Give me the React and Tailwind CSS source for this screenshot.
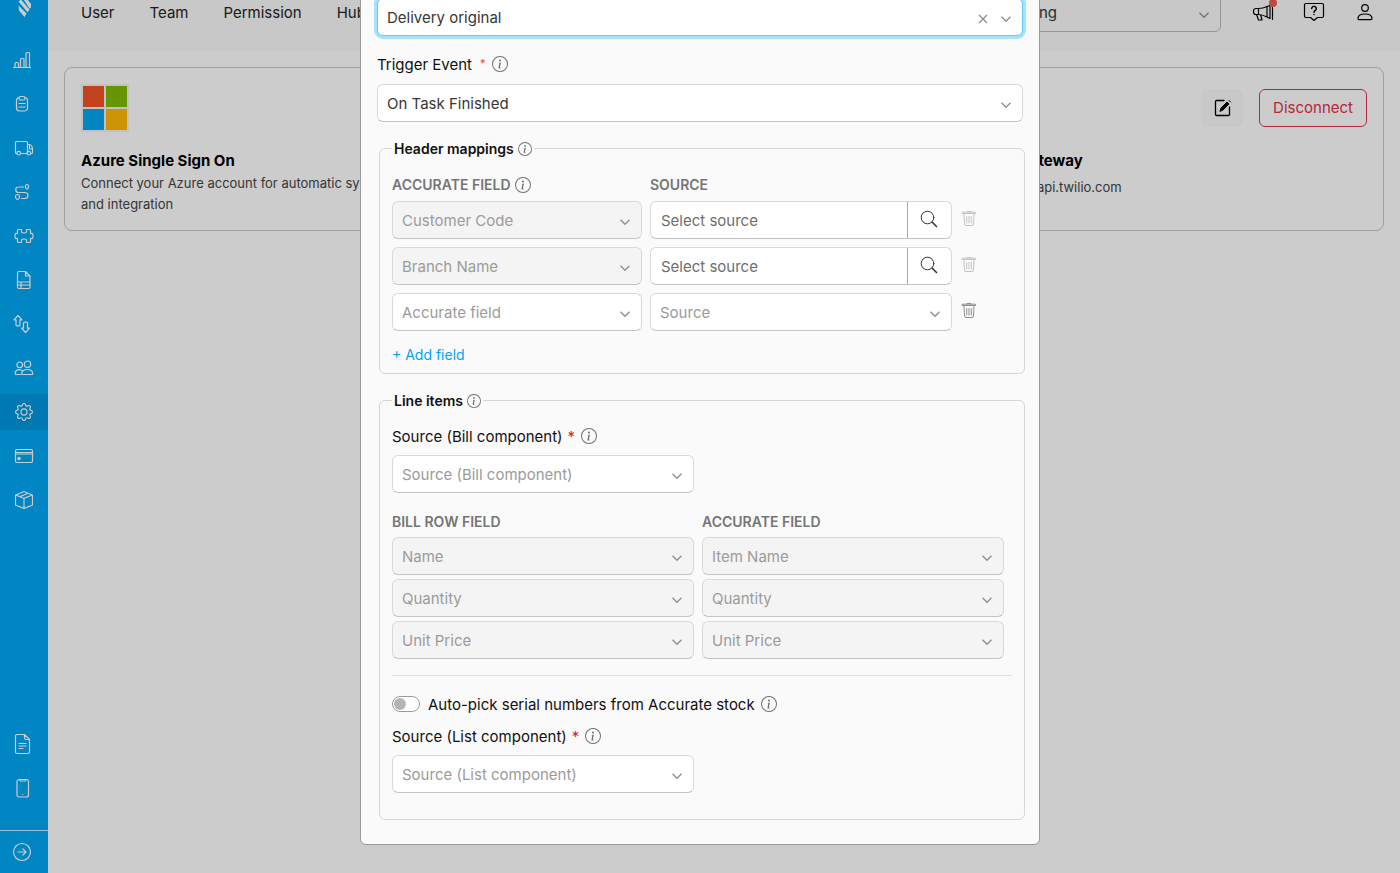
import { useState } from "react";
import { BsInfoCircle, BsGear, BsBoxSeam } from "react-icons/bs";

function Icon({ children, className = "" }) {
  return (
    <svg width="24" height="24" viewBox="0 0 24 24" fill="none" stroke="currentColor" strokeWidth="1.2" strokeLinecap="round" strokeLinejoin="round" className={className} aria-hidden="true">
      {children}
    </svg>
  );
}

const mainMenu = [
  { label: "Dashboard", icon: <Icon><path d="M1.5 19.5h17M3 19v-3.500a1 1 0 0 1 1-1h1.500a1 1 0 0 1 1 1V19M8.500 19v-7.500a1 1 0 0 1 1-1H11a1 1 0 0 1 1 1V19M14 19V5.500a1 1 0 0 1 1-1h1.500a1 1 0 0 1 1 1V19" /></Icon> },
  { label: "Tasks", icon: <Icon><path d="M7 5.500a3 3 0 0 0-2.500 3V16A3 3 0 0 0 7.500 19h5a3 3 0 0 0 3-3V8.500a3 3 0 0 0-2.500-3M7 11.500h6M7 15h6" /><rect x="7" y="4.500" width="6" height="3.500" rx="1.500" /></Icon> },
  { label: "Delivery", icon: <Icon><path d="M5 17.500H4.500a1 1 0 0 1-1-1v-10a1 1 0 0 1 1-1h10a1 1 0 0 1 1 1v11M8.500 17.500H15M15.500 8.500h2c1.500 0 3 2.500 3 4.500v3.500a1 1 0 0 1-1 1h-1" /><circle cx="6.700" cy="17.200" r="1.800" /><circle cx="16.800" cy="17.200" r="1.800" /><path d="M17.500 9v4h3" /></Icon> },
  { label: "Routes", icon: <Icon><path d="M11.500 7H6.500a2.700 2.700 0 0 0 0 5.500H13a3 3 0 0 1 0 6H9.500" /><path d="M14.500 9c-2-2.500-1-4.500.5-4.500s2.500 2 .5 4.500zM5.500 14.500a2 2 0 0 1 2 2c0 1.300-1 3-2 3s-2-1.700-2-3a2 2 0 0 1 2-2z" /></Icon> },
  { label: "Integrations", icon: <Icon><path d="M6.500 5.500H9c.8 0 .8.600.500 1.300-.5 1.200.5 2.200 2.500 2.200s3-1 2.500-2.200c-.3-.7-.3-1.300.5-1.300h2.500a1 1 0 0 1 1 1V9c0 .8.500.8 1 .5 1.200-.5 1.500.5 1.500 2.500s-.3 3-1.500 2.500c-.5-.3-1-.3-1 .5v2.500a1 1 0 0 1-1 1H15c-.8 0-.8-.6-.5-1.300.5-1.200-.5-2.200-2.500-2.200s-3 1-2.500 2.200c.3.700.3 1.300-.5 1.300H6.500a1 1 0 0 1-1-1V15c0-.8-.5-.8-1-.5-1.200.5-1.500-.5-1.500-2.500s.3-3 1.500-2.500c.5.300 1 .3 1-.5V6.500a1 1 0 0 1 1-1z" /></Icon> },
  { label: "Reports", icon: <Icon><path d="M13.500 3.500H7a1.500 1.500 0 0 0-1.500 1.500v14A1.500 1.500 0 0 0 7 20.500h9.500A1.500 1.500 0 0 0 18 19V8zM13.500 3.500V8H18M5.500 14H18M5.500 17H18M9 14v6" /></Icon> },
  { label: "Flows", icon: <Icon><path d="M6 3.500l4 4.300H8v5a1 1 0 0 1-1 1H5a1 1 0 0 1-1-1v-5H2zM13.500 20.500l-4-4.300h2v-5a1 1 0 0 1 1-1h2a1 1 0 0 1 1 1v5h2z" /></Icon> },
  { label: "Users", icon: <Icon><circle cx="7.700" cy="8.800" r="2.800" /><circle cx="15.500" cy="8.200" r="3.200" /><path d="M8.500 18.500H4a.8.800 0 0 1-.8-.8c0-2.500 2-4 4.300-4 .8 0 1.600.2 2.200.500M10.500 18.500a.8.800 0 0 1-.8-.8c0-2.700 2.400-4.200 5.600-4.200s5.400 1.500 5.400 4.200a.8.800 0 0 1-.8.800z" /></Icon> },
  { label: "Settings", icon: <BsGear size={18} />, active: true },
  { label: "Billing", icon: <Icon><rect x="3.500" y="5.500" width="17" height="13" rx="1.500" /><path d="M3.500 8.500h17M3.500 10h17" /><circle cx="7" cy="14.500" r="1.200" fill="currentColor" /></Icon> },
  { label: "Inventory", icon: <BsBoxSeam size={18} /> },
];

const bottomMenu = [
  { label: "Documentation", icon: <Icon className="-ml-1"><path d="M14.500 2.500H7A1.500 1.500 0 0 0 5.500 4v16A1.500 1.500 0 0 0 7 21.500h11a1.500 1.500 0 0 0 1.500-1.500V7.500zM14.500 2.500v3.500a1.500 1.500 0 0 0 1.500 1.500h3.500M9 11.500h7M9 14h7M9 16.500h4" /></Icon> },
  { label: "Mobile app", icon: <Icon className="-ml-1"><rect x="7" y="3.500" width="11.500" height="17.500" rx="2" /><path d="M9.500 3.500l.8 1.500h5l.7-1.500M12.700 18.500h.1" /></Icon> },
];

function Sidebar() {
  return (
    <aside className="flex w-12 shrink-0 flex-col bg-[#00a8f3] text-white">
      <svg viewBox="0 0 24 24" className="-mt-1 ml-3 h-6 w-6" aria-hidden="true" fill="currentColor">
        <path d="M11 2.500l2.500-1.500 5.500 7v3.500l-1.500 1zM6.500 5.500l2.500-2 8.500 10-2 2.800zM6.500 9.500l8 8-2 3.500-5.500-6.500z" />
      </svg>
      <nav className="mt-[22px] flex flex-col gap-2">
        {mainMenu.map((item) => (
          <a key={item.label} href="#" aria-label={item.label} className={`flex h-9 items-center justify-center ${item.active ? "bg-[#0097de]" : ""}`}>
            {item.icon}
          </a>
        ))}
      </nav>
      <nav className="mt-auto flex flex-col gap-2 pb-6">
        {bottomMenu.map((item) => (
          <a key={item.label} href="#" aria-label={item.label} className="flex h-9 items-center justify-center">
            {item.icon}
          </a>
        ))}
      </nav>
      <button aria-label="Expand menu" className="flex h-[43px] w-full items-center border-t border-white/80 pl-[10px]">
        <Icon><circle cx="12" cy="12" r="8.500" /><path d="M8 12h8M12.800 8.800L16 12l-3.200 3.200" /></Icon>
      </button>
    </aside>
  );
}

function Chevron() {
  return (
    <svg width="12" height="12" viewBox="0 0 12 12" fill="none" stroke="currentColor" strokeWidth="1.300" className="pointer-events-none absolute top-1/2 right-[11px] -mt-1 text-[#8f8f8f]" aria-hidden="true">
      <path d="M1.500 3.800L6 8.300l4.500-4.500" />
    </svg>
  );
}

function Select({ value, muted = true, disabled = false, focused = false, ...rest }) {
  const border = focused
    ? "border-[#5ccbfb] ring-[3px] ring-[#a6e2fd]"
    : "border-[#d9d9d9] border-b-[#c4c4c4]";
  return (
    <div className="relative">
      <select
        disabled={disabled}
        defaultValue={value}
        className={`block h-[38px] w-full appearance-none rounded-md border pt-0.5 pr-8 pl-[9px] opacity-100 outline-none ${border} ${disabled ? "bg-[#f4f4f4]" : "bg-white"} ${muted ? "text-[#9b9b9b]" : "text-[#363636]"}`}
        {...rest}
      >
        <option>{value}</option>
      </select>
      <Chevron />
    </div>
  );
}

function Info({ size = 16 }) {
  return <BsInfoCircle size={size} className="shrink-0 text-[#707070]" aria-hidden="true" />;
}

function FieldLabel({ htmlFor, children, mark }) {
  return (
    <div className="flex h-6 items-center gap-[6px]">
      <label htmlFor={htmlFor} className="flex pt-0.5">
        {children} {mark || <span className="ml-[5px] text-[#e5162d]">*</span>}
      </label>
      <Info />
    </div>
  );
}

function SourceInput({ label }) {
  return (
    <div className="flex h-[38px] rounded-md border border-[#d9d9d9] border-b-[#c4c4c4] bg-white">
      <input aria-label={label} placeholder="Select source" className="min-w-0 flex-1 rounded-l-md pt-0.5 pl-[10px] outline-none placeholder:text-[#6e6e6e]" />
      <button aria-label="Search source" className="flex w-11 items-center justify-center border-l border-[#a8a8a8] pr-0.5 pb-0.5 text-[#333]">
        <Icon>
          <circle cx="10.500" cy="10.500" r="6.300" strokeWidth="1" />
          <path d="M15.300 15.300l4.200 4.200" strokeWidth="1.600" />
        </Icon>
      </button>
    </div>
  );
}

function TrashButton({ disabled = false }) {
  return (
    <button disabled={disabled} aria-label="Remove field" className={`-ml-2 flex h-9 w-[34px] items-center justify-center ${disabled ? "text-[#c4c4c4]" : "text-[#8f8f8f]"}`}>
      <Icon>
        <path d="M5.500 6.500h13v-1.300h-13zM10 5V4.500h4V5M7 7l.5 10a1.500 1.500 0 0 0 1.500 1.500h6a1.500 1.500 0 0 0 1.500-1.500L17 7M9.700 9.500v6.500M12 9.500v6.500M14.300 9.500v6.500" strokeWidth="1" />
      </Icon>
    </button>
  );
}

function Legend({ children }) {
  return (
    <legend className="px-0.5">
      <span className="flex h-[21px] items-center gap-1 text-[14px] font-semibold text-[#111]">
        {children} <Info size={14} />
      </span>
    </legend>
  );
}

const headingClass = "flex items-center gap-1 text-[14px] font-semibold text-[#757575]";
const fieldsetClass = "mt-4 -mr-0.5 ml-0.5 rounded-md border border-[#d6d6d6] px-3";

const headerRows = ["Customer Code", "Branch Name"];
const billRows = [
  ["Name", "Item Name"],
  ["Quantity", "Quantity"],
  ["Unit Price", "Unit Price"],
];

function MappingModal() {
  const [autoPick, setAutoPick] = useState(false);

  return (
    <div className="fixed inset-0 flex items-end justify-center overflow-hidden bg-black/20 pb-7">
      <div role="dialog" aria-label="Accurate mapping" className="w-full max-w-[680px] rounded-md border border-[#999] bg-[#fafafa] px-4 pt-4 pb-6 text-[#111]">
        <div className="relative">
          <Select value="Delivery original" muted={false} focused aria-label="Document" />
          <button aria-label="Clear" className="absolute top-1/2 right-[34px] -mt-1 text-[#8f8f8f]">
            <svg width="12" height="12" viewBox="0 0 12 12" fill="none" stroke="currentColor" strokeWidth="1.300"><path d="M2 2l8 8M10 2l-8 8" /></svg>
          </button>
        </div>

        <div className="mt-4 mb-2">
          <FieldLabel htmlFor="trigger" mark={<span className="ml-2 text-[11px] leading-5 text-[#f0443a]">*</span>}>Trigger Event</FieldLabel>
        </div>
        <Select id="trigger" value="On Task Finished" muted={false} />

        <fieldset className={`${fieldsetClass} pb-2`}>
          <Legend>Header mappings</Legend>
          <div className="grid grid-cols-[250px_302px_34px] gap-x-2 pt-[14px]">
            <div className={`${headingClass} mb-1 h-6`}>ACCURATE FIELD <Info /></div>
            <div className={`${headingClass} mb-1 h-6`}>SOURCE</div>
          </div>
          <div className="flex flex-col gap-2">
            {headerRows.map((name) => (
              <div key={name} className="grid grid-cols-[250px_302px_34px] gap-x-2">
                <Select value={name} disabled aria-label={name} />
                <SourceInput label={`${name} source`} />
                <TrashButton disabled />
              </div>
            ))}
            <div className="grid grid-cols-[250px_302px_34px] gap-x-2">
              <Select value="Accurate field" aria-label="Accurate field" />
              <Select value="Source" aria-label="Source" />
              <TrashButton />
            </div>
          </div>
          <button className="mt-[14px] block h-5 text-[14px] leading-5 text-[#00a3f5]">+ Add field</button>
        </fieldset>

        <fieldset className={`${fieldsetClass} pb-[26px]`}>
          <Legend>Line items</Legend>
          <div className="mt-[13px] mb-[7px]">
            <FieldLabel htmlFor="bill-source">Source (Bill component)</FieldLabel>
          </div>
          <div className="grid grid-cols-2 gap-2 pr-2">
            <Select id="bill-source" value="Source (Bill component)" />
          </div>

          <div className="mt-[18px] grid grid-cols-2 gap-x-2 gap-y-1 pr-2">
            <div className={`${headingClass} h-[22px]`}>BILL ROW FIELD</div>
            <div className={`${headingClass} h-[22px]`}>ACCURATE FIELD</div>
            {billRows.map(([bill, accurate]) => [
              <Select key={`bill-${bill}`} value={bill} disabled aria-label={`Bill ${bill}`} />,
              <Select key={`acc-${accurate}`} value={accurate} disabled aria-label={`Accurate ${accurate}`} />,
            ])}
          </div>

          <hr className="mt-4 border-[#dedede]" />

          <div className="mt-4 flex h-6 items-center">
            <input
              id="auto-pick"
              type="checkbox"
              role="switch"
              checked={autoPick}
              onChange={(e) => setAutoPick(e.target.checked)}
              className="flex h-4 w-7 shrink-0 appearance-none items-center rounded-full border border-[#9b9b9b] bg-white px-px before:h-3 before:w-3 before:rounded-full before:bg-[#b5b5b5] checked:justify-end"
            />
            <label htmlFor="auto-pick" className="mr-[6px] ml-2 pt-0.5">Auto-pick serial numbers from Accurate stock</label>
            <Info />
          </div>

          <div className="mt-2 mb-[7px]">
            <FieldLabel htmlFor="list-source">Source (List component)</FieldLabel>
          </div>
          <div className="grid grid-cols-2 gap-2 pr-2">
            <Select id="list-source" value="Source (List component)" />
          </div>
        </fieldset>
      </div>
    </div>
  );
}

function Header() {
  return (
    <header className="-mt-[26px] flex h-[77px] items-center bg-[#fafafa] pr-[23px] pl-[33px] text-[#222]">
      <nav className="flex gap-[35px]">
        <a href="#">User</a>
        <a href="#">Team</a>
        <a href="#">Permission</a>
        <a href="#">Hub</a>
      </nav>
      <div className="relative mr-[30px] ml-auto w-[306px]">
        <select aria-label="Hub" className="block h-[38px] w-full appearance-none rounded-md border border-[#bbb] bg-transparent pr-8 pl-[9px] text-[#363636]">
          <option>Gudang Semarang</option>
        </select>
        <Chevron />
      </div>
      <div className="flex gap-[27px] text-black">
        <button aria-label="Announcements" className="relative">
          <Icon>
            <path d="M19 4.500v13M21.500 4.500v14M16 5.500l3-1M16 5.500v10.500l3 1.500M16 5.500c-3 1.500-5.500 2-8.500 2H5a2.500 2.500 0 0 0-2.500 2.500v1A2.500 2.500 0 0 0 5 13.500h2.500c3 0 5.500 1 8.500 2.500M7.500 7.500v6M5.500 13.500l2 5.500h3.500l-1.300-5" />
          </Icon>
          <span className="absolute -top-0.5 -right-0.5 h-2 w-2 rounded-full bg-[#f05a50]" />
        </button>
        <button aria-label="Help">
          <Icon>
            <path d="M4 2.500h16a1.500 1.500 0 0 1 1.500 1.500v11a1.500 1.500 0 0 1-1.500 1.500h-4.500L12 19.500l-3.500-3H4A1.500 1.500 0 0 1 2.500 15V4A1.500 1.500 0 0 1 4 2.500z" />
            <path d="M9.700 7.500a2.300 2.300 0 1 1 3.500 2c-.8.500-1.200.9-1.200 1.800M12 13.500v.1" strokeWidth="1.500" />
          </Icon>
        </button>
        <button aria-label="Account">
          <Icon>
            <circle cx="12" cy="7" r="3.300" />
            <path d="M5 17.500c0-3 3-4.500 7-4.500s7 1.500 7 4.500a1.200 1.200 0 0 1-1.200 1.200H6.200A1.200 1.200 0 0 1 5 17.500z" />
          </Icon>
        </button>
      </div>
    </header>
  );
}

function Card({ logo, title, actions, children }) {
  return (
    <section className="rounded-lg border border-[#c8c8c8] px-4 pt-4 pb-[15px]">
      <div className="flex h-12 items-center justify-between">
        {logo}
        {actions}
      </div>
      <h2 className="mt-[17px] leading-6 font-bold text-black">{title}</h2>
      {children}
    </section>
  );
}

function AzureLogo() {
  return (
    <svg width="48" height="48" viewBox="0 0 48 48" aria-hidden="true">
      <path fill="#f3f3f3" d="M0 0h48v48H0z" />
      <path fill="#f35325" d="M2 2h21v21H2z" />
      <path fill="#81bc06" d="M25 2h21v21H25z" />
      <path fill="#05a6f0" d="M2 25h21v21H2z" />
      <path fill="#ffba08" d="M25 25h21v21H25z" />
    </svg>
  );
}

export default function App() {
  return (
    <div className="flex h-screen overflow-hidden bg-white font-['Inter',sans-serif] text-[15px] leading-6">
      <Sidebar />
      <div className="min-w-0 flex-1">
        <Header />
        <main className="grid grid-cols-3 gap-4 p-4">
          <Card logo={<AzureLogo />} title="Azure Single Sign On">
            <p className="text-[13px] leading-[21px] text-[#444]">
              Connect your Azure account for automatic sync
              <br />
              and integration
            </p>
          </Card>
          <div />
          <Card
            title="Twilio Gateway"
            logo={<span />}
            actions={
              <div className="flex gap-4">
                <button aria-label="Edit" className="flex h-[38px] w-[41px] items-center justify-center rounded-md bg-[#fafafa] text-black">
                  <Icon>
                    <path d="M13 4.500H5.500a1 1 0 0 0-1 1v13a1 1 0 0 0 1 1h12a1 1 0 0 0 1-1V11" strokeWidth="1.300" />
                    <path d="M9 15l1-3 6-6 2 2-6 6zM18 4.500l1.500 1.500" fill="currentColor" strokeWidth="1" />
                  </Icon>
                </button>
                <button className="h-[38px] rounded-md border border-[#e0324a] px-[13px] text-[#e0324a]">Disconnect</button>
              </div>
            }
          >
            <p className="mt-1 text-[13px] leading-[21px] text-[#444]">via https://api.twilio.com</p>
          </Card>
        </main>
      </div>
      <MappingModal />
    </div>
  );
}
